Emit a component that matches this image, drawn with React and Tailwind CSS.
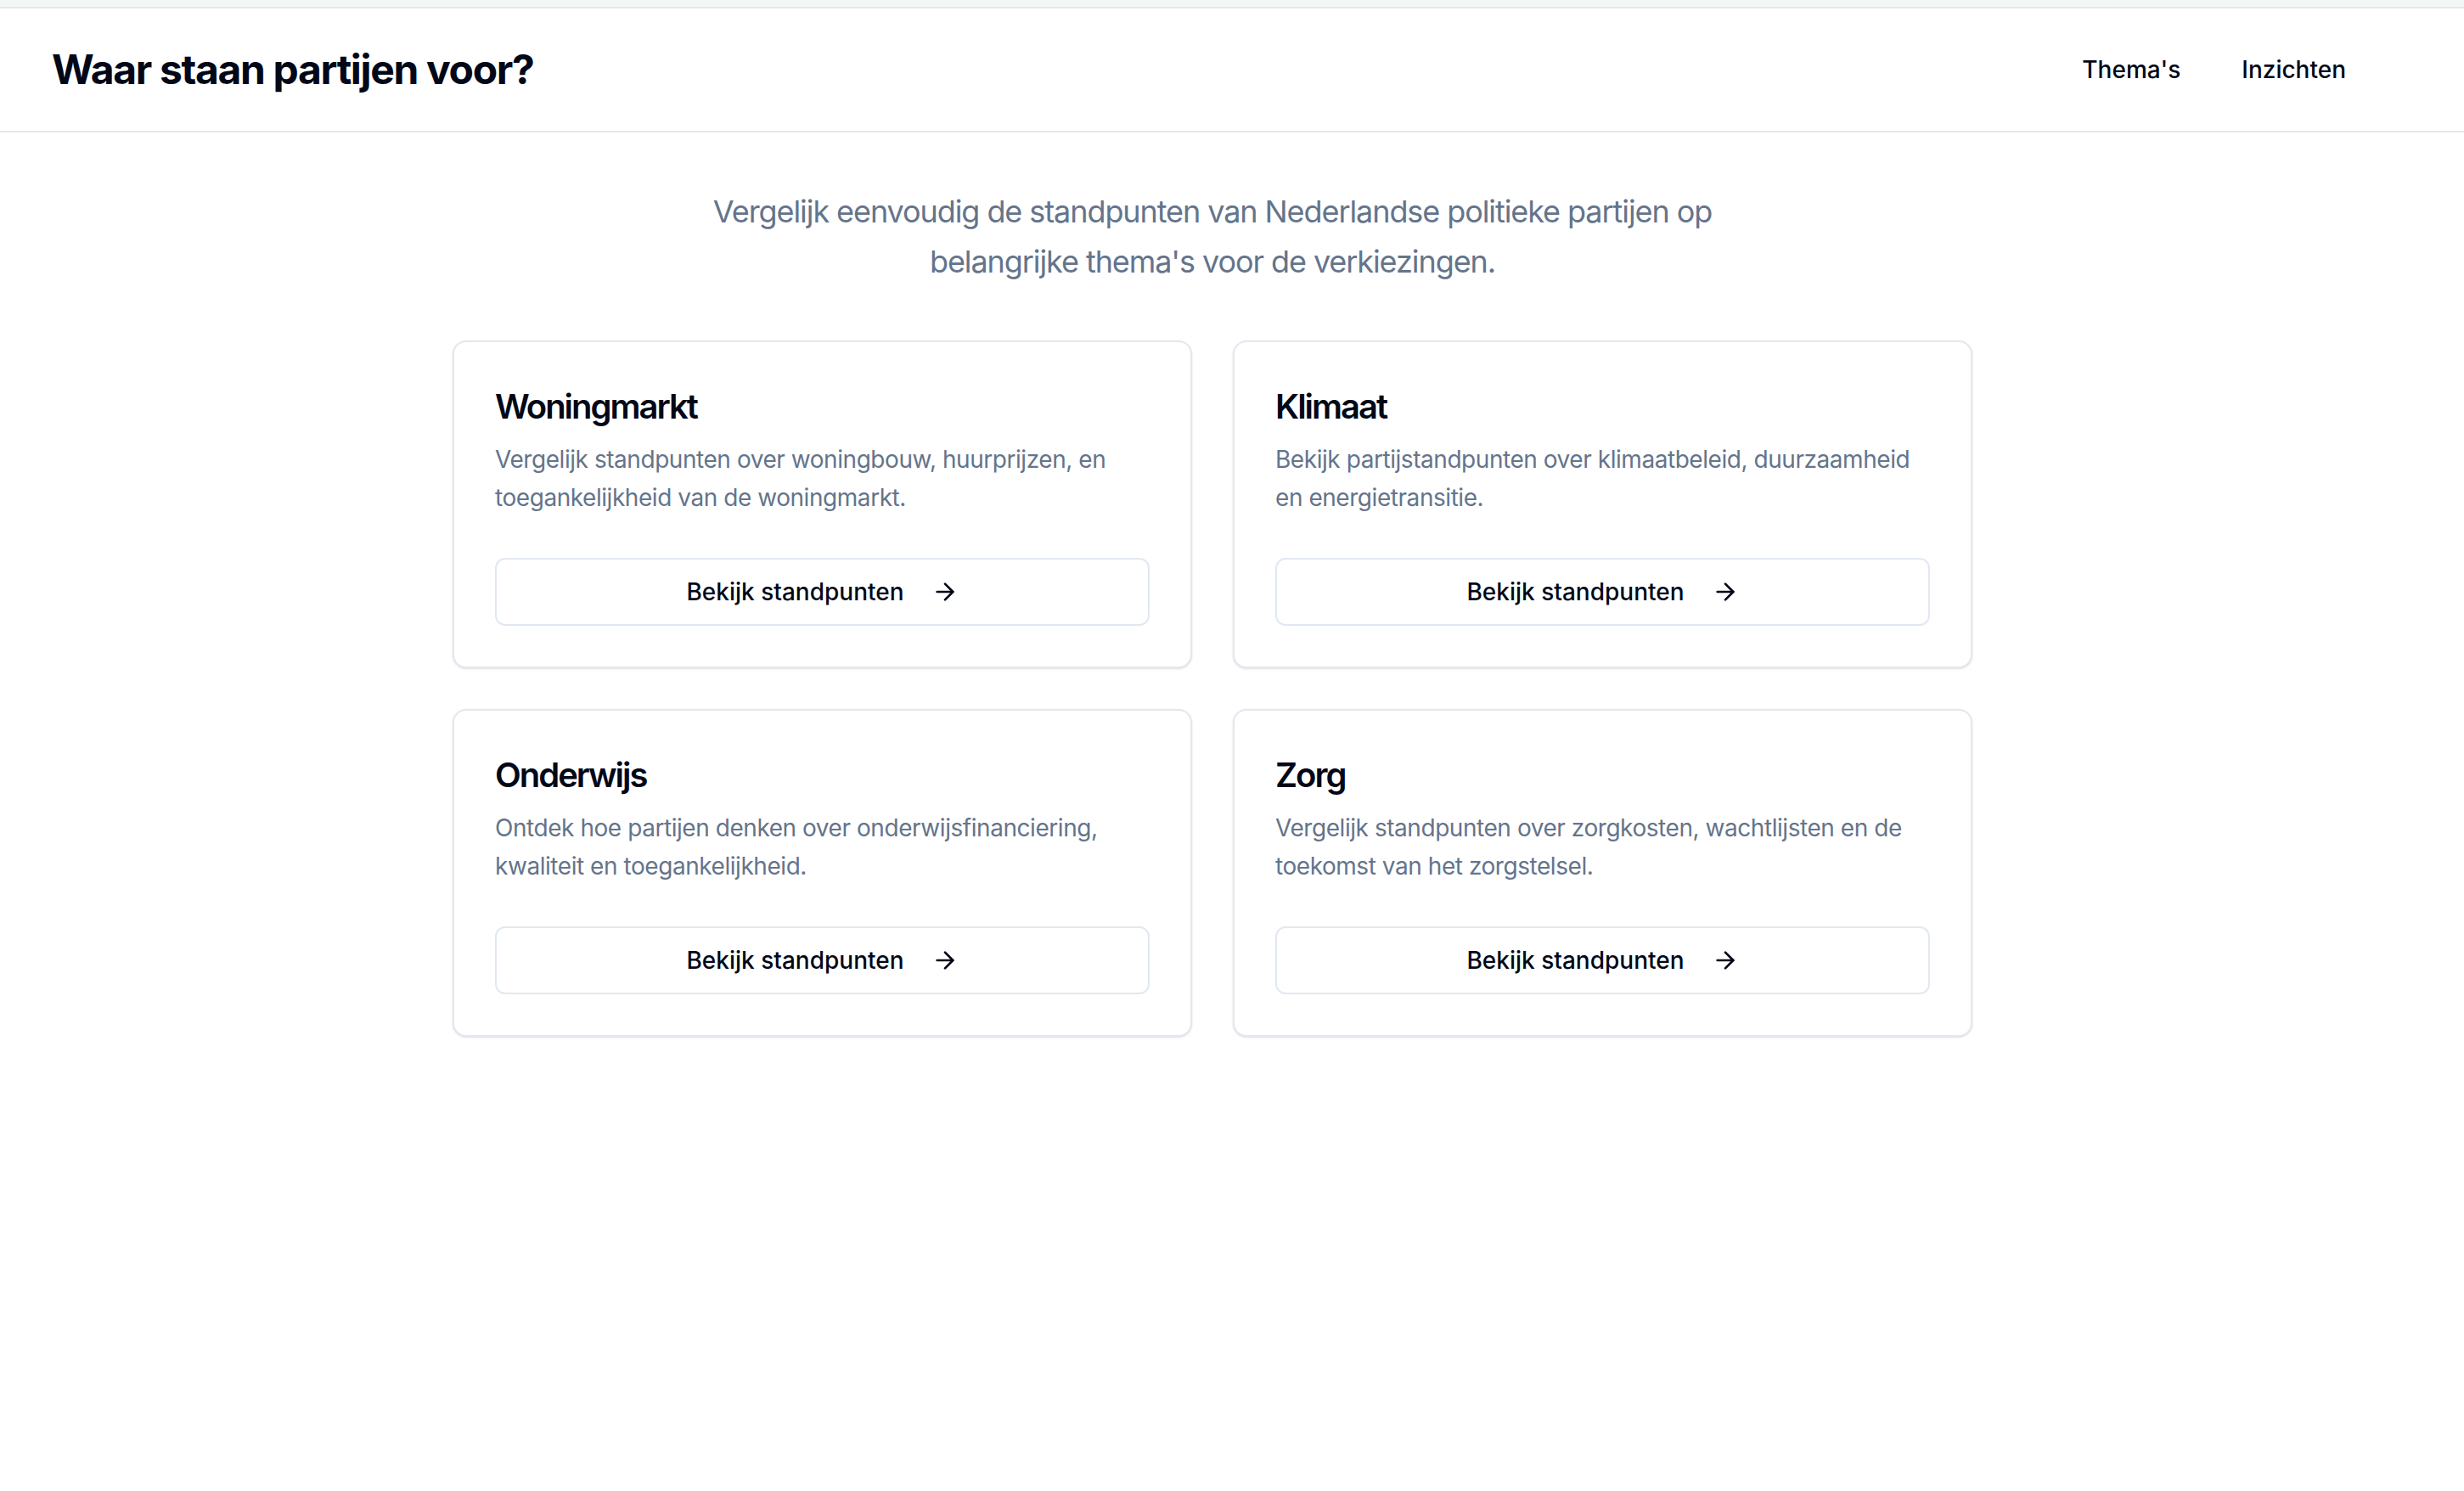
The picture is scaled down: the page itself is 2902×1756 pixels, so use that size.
import React from "react";

const themes = [
  {
    title: "Woningmarkt",
    desc: "Vergelijk standpunten over woningbouw, huurprijzen, en toegankelijkheid van de woningmarkt.",
  },
  {
    title: "Klimaat",
    desc: "Bekijk partijstandpunten over klimaatbeleid, duurzaamheid en energietransitie.",
  },
  {
    title: "Onderwijs",
    desc: "Ontdek hoe partijen denken over onderwijsfinanciering, kwaliteit en toegankelijkheid.",
  },
  {
    title: "Zorg",
    desc: "Vergelijk standpunten over zorgkosten, wachtlijsten en de toekomst van het zorgstelsel.",
  },
];

function Arrow() {
  return (
    <svg
      width="32"
      height="32"
      viewBox="0 0 24 24"
      fill="none"
      stroke="currentColor"
      strokeWidth="2"
      strokeLinecap="round"
      strokeLinejoin="round"
    >
      <path d="M5 12h14" />
      <path d="m12 5 7 7-7 7" />
    </svg>
  );
}

function Card({ title, desc }) {
  return (
    <div className="rounded-[16px] border-2 border-[#e2e8f0] bg-white shadow-sm">
      <div className="p-[48px] flex flex-col gap-[12px]">
        <h3 className="text-[40px] leading-[56px] font-semibold tracking-[-0.05em] text-[#020817]">
          {title}
        </h3>
        <p className="text-[28px] leading-[45px] tracking-[-0.016em] text-[#64748b]">{desc}</p>
      </div>
      <div className="px-[48px] pb-[48px]">
        <button className="w-full h-[80px] rounded-[12px] border-2 border-[#e2e8f0] bg-white flex items-center justify-center gap-[32px] text-[28px] font-medium text-[#020817]">
          <span>Bekijk standpunten</span>
          <Arrow />
        </button>
      </div>
    </div>
  );
}

export default function App() {
  return (
    <div
      className="min-h-[1756px] bg-white"
      style={{ fontFamily: "Inter, 'Noto Sans', sans-serif" }}
    >
      <div className="h-[8px] bg-[#f2f7f5] border-b-2 border-[#e2e8f0] box-content" />
      <header className="h-[144px] border-b-2 border-[#e2e8f0] box-content flex items-center justify-between pl-[61px] pr-[139px]">
        <h1 className="text-[48px] font-bold tracking-[-0.028em] text-[#020817]">
          Waar staan partijen voor?
        </h1>
        <nav className="flex items-center gap-[72px] text-[28px] font-medium text-[#020817]">
          <a>Thema's</a>
          <a>Inzichten</a>
        </nav>
      </header>
      <main className="pr-[46px] pt-[64px]">
        <div className="mx-auto w-[1790px]">
          <p className="mx-auto max-w-[1344px] text-center text-[36px] leading-[58.5px] tracking-[-0.03em] text-[#64748b] mb-[64px]">
            Vergelijk eenvoudig de standpunten van Nederlandse politieke partijen op
            belangrijke thema's voor de verkiezingen.
          </p>
          <div className="grid grid-cols-2 gap-[48px]">
            {themes.map((t) => (
              <Card key={t.title} {...t} />
            ))}
          </div>
        </div>
      </main>
    </div>
  );
}
